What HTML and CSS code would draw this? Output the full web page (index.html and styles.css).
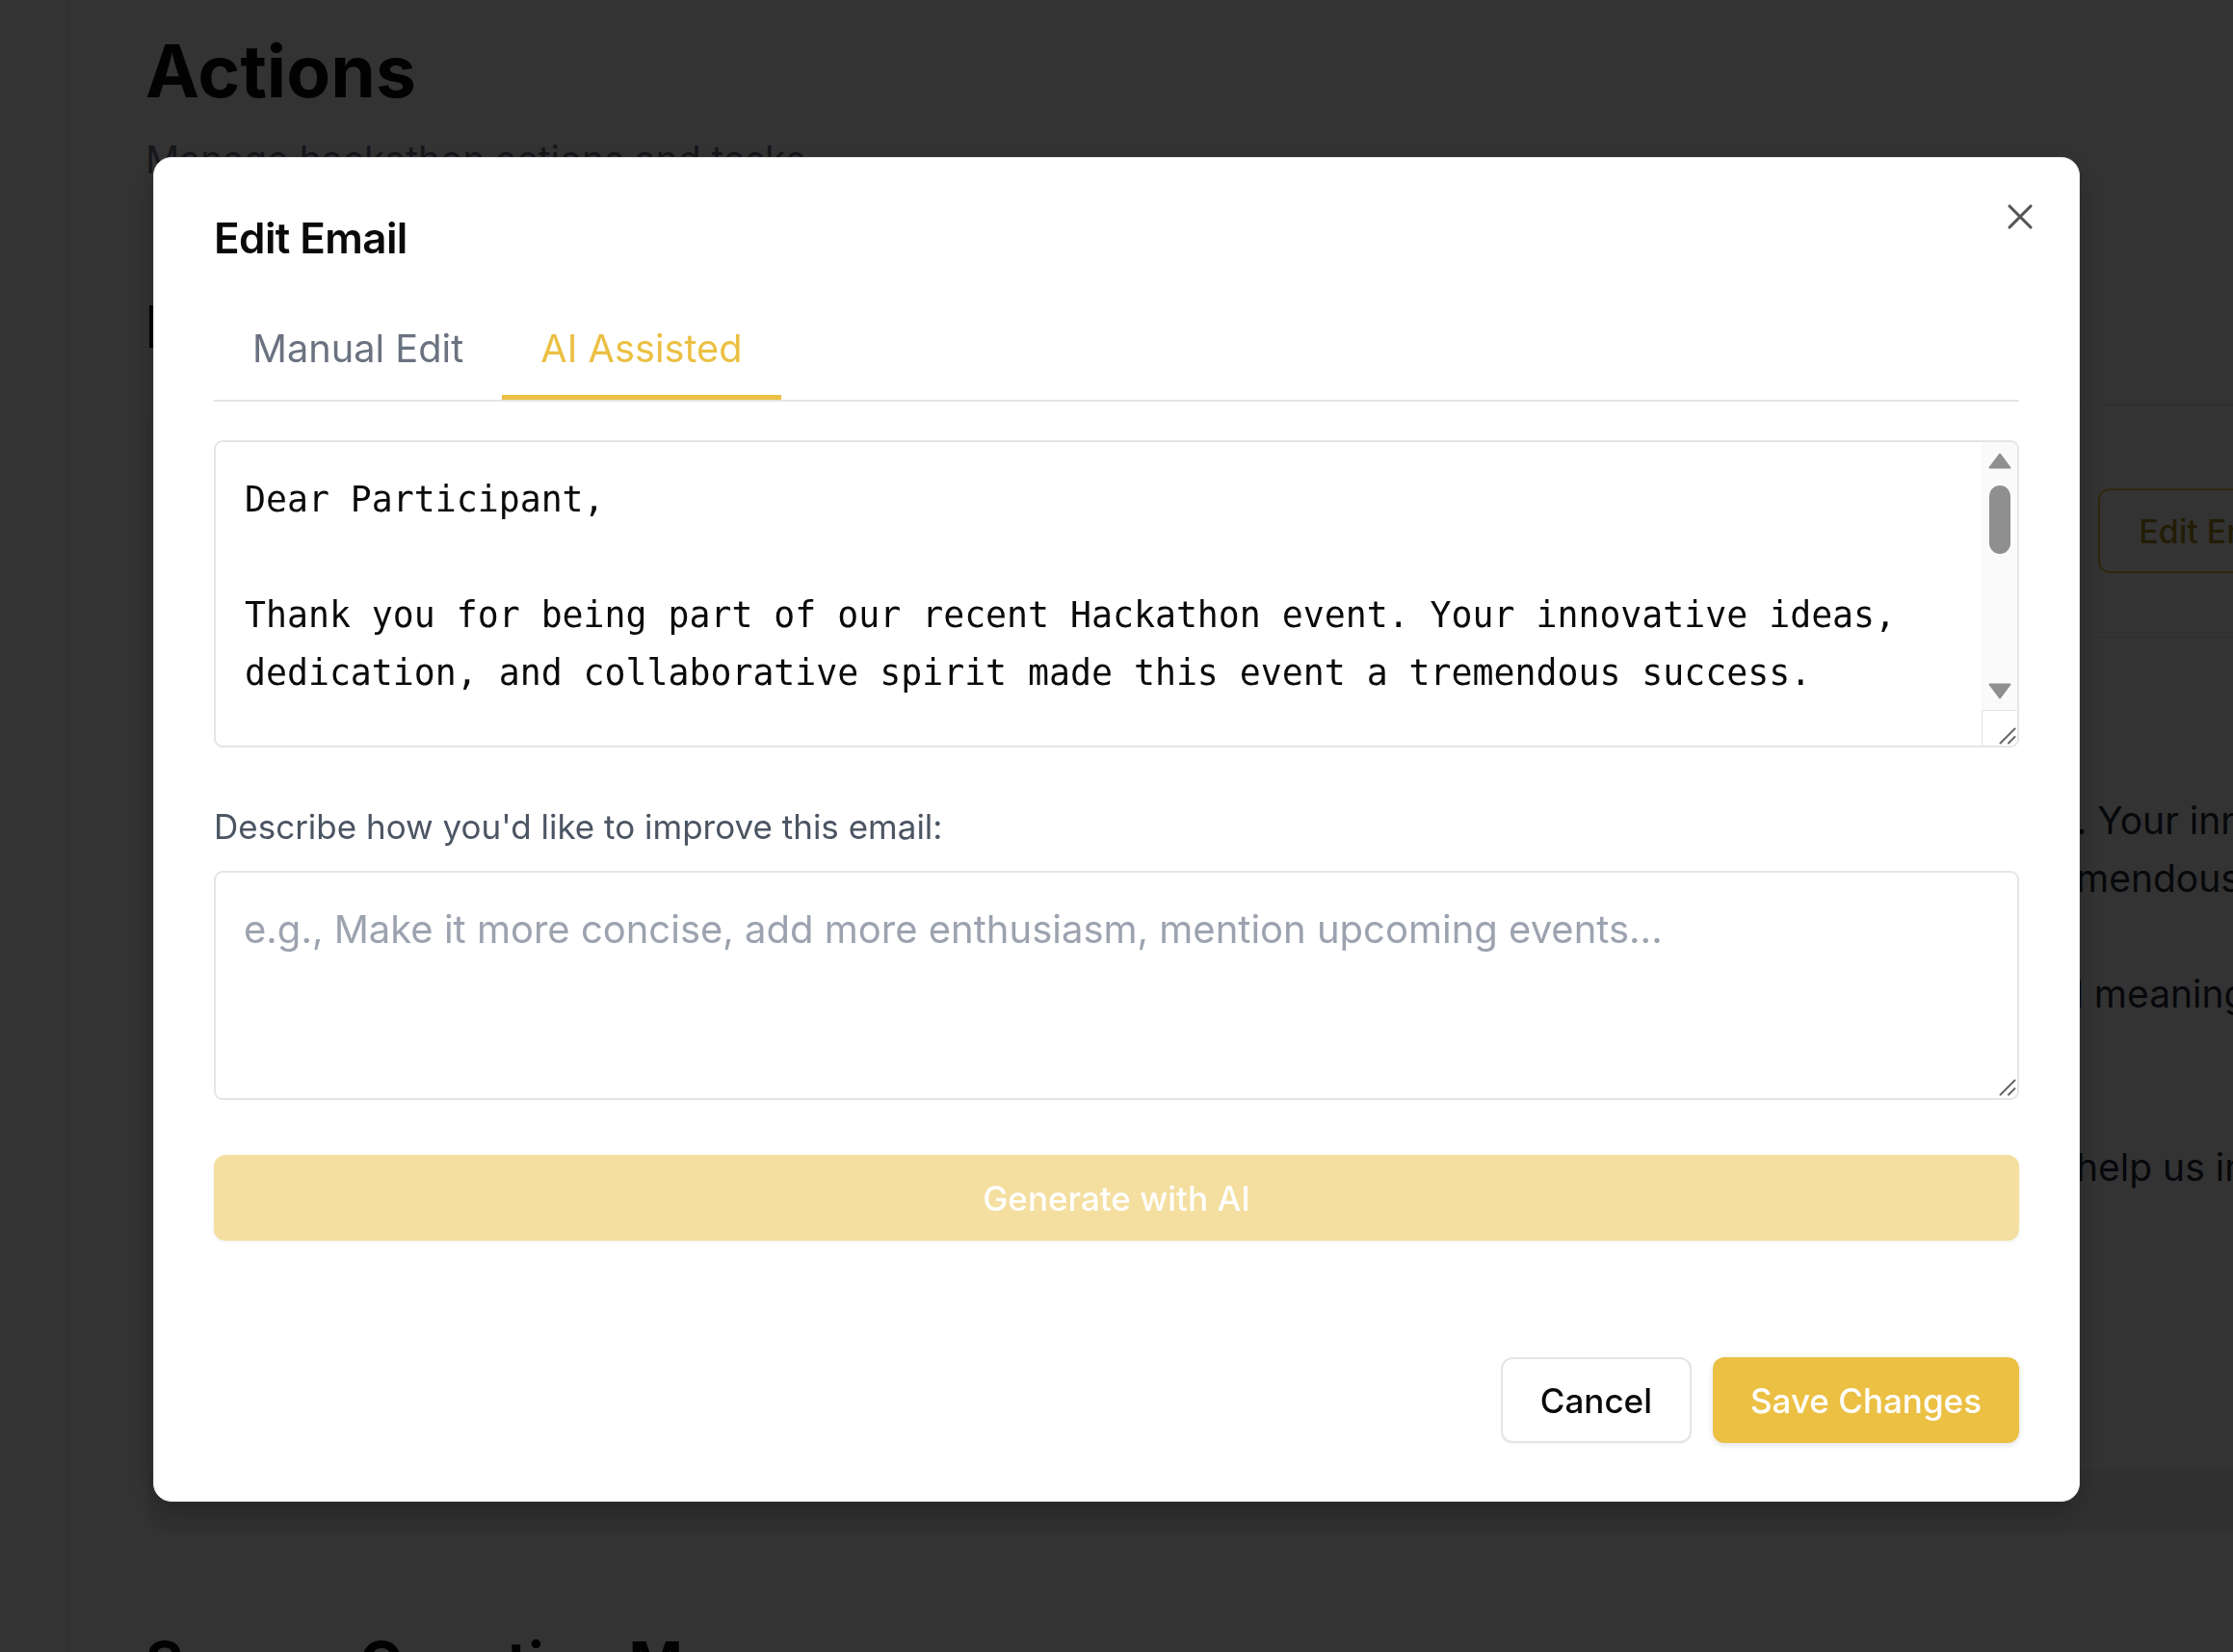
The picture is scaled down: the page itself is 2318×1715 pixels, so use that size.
FILE: index.html
```html
<!DOCTYPE html>
<html lang="en">
<head>
<meta charset="utf-8">
<title>Actions – Edit Email</title>
<link rel="stylesheet" href="styles.css">
</head>
<body>
<div class="app">
  <aside class="sidebar"></aside>
  <main class="main">
    <h1 class="page-title">Actions</h1>
    <p class="page-subtitle">Manage hackathon actions and tasks</p>
    <h2 class="section-title">Email Templates</h2>
    <section class="card">
      <div class="card-head">
        <div class="card-head-text">
          <div class="card-title">Post-Event Thank You Email</div>
        </div>
        <button class="btn-outline">Edit Email</button>
      </div>
      <div class="card-body">
        <div class="pline"><span class="pre">Thank you for being part of our recent Hackathon event</span><span class="vis">. Your innovative ideas, dedication, and</span></div>
        <div class="pline"><span class="pre">collaborative spirit made this event a tre</span><span class="vis">mendous success.</span></div>
        <div class="pline"><span class="pre">&nbsp;</span></div>
        <div class="pline"><span class="pre">We hope you found the experience both rewarding an</span><span class="vis tuck">d meaningful. We would love to hear</span></div>
        <div class="pline"><span class="pre">your thoughts about the event.</span></div>
        <div class="pline"><span class="pre">&nbsp;</span></div>
        <div class="pline"><span class="pre">Please take a moment to complete our short survey to </span><span class="vis">help us improve future events.</span></div>
      </div>
      <div class="card-foot"></div>
    </section>
    <h2 class="section-title section-title-lower">Survey Question Manager</h2>
  </main>
</div>

<div class="overlay">
  <div class="modal" role="dialog" aria-labelledby="modal-title">
    <button class="close-btn" aria-label="Close">
      <svg viewBox="0 0 24 24" width="44" height="44"><path d="M18 6 6 18M6 6l12 12" fill="none" stroke="currentColor" stroke-width="1.7" stroke-linecap="round"/></svg>
    </button>
    <h2 class="modal-title" id="modal-title">Edit Email</h2>
    <div class="tabs">
      <button class="tab">Manual Edit</button>
      <button class="tab tab-active">AI Assisted</button>
    </div>
    <div class="email-box">
      <div class="email-text">Dear Participant,

Thank you for being part of our recent Hackathon event. Your innovative ideas, dedication, and collaborative spirit made this event a tremendous success.

We truly appreciate the time and energy you invested. We hope you found the experience both rewarding and meaningful.

Please take a moment to complete our short survey to help us improve future events.</div>
      <div class="scrollbar">
        <svg class="sb-arrow sb-up" viewBox="0 0 24 17" width="24" height="17"><path d="M12 1.5 22.5 15.5H1.5Z" fill="#8f8f8f" stroke="#8f8f8f" stroke-width="2" stroke-linejoin="round"/></svg>
        <div class="sb-thumb"></div>
        <div class="sb-space"></div>
        <svg class="sb-arrow sb-down" viewBox="0 0 24 18" width="24" height="18"><path d="M12 16.5 22.5 2.5H1.5Z" fill="#8f8f8f" stroke="#8f8f8f" stroke-width="2" stroke-linejoin="round"/></svg>
        <div class="sb-corner">
          <svg class="grip" viewBox="0 0 18 18" width="18" height="18"><path d="M1.5 16.5 16.5 1.5M10 16.5 16.5 10" fill="none" stroke="#666" stroke-width="2" stroke-linecap="round"/></svg>
        </div>
      </div>
    </div>
    <div class="field-label">Describe how you'd like to improve this email:</div>
    <div class="prompt-box">
      <span class="placeholder">e.g., Make it more concise, add more enthusiasm, mention upcoming events...</span>
      <svg class="grip prompt-grip" viewBox="0 0 18 18" width="18" height="18"><path d="M1.5 16.5 16.5 1.5M10 16.5 16.5 10" fill="none" stroke="#666" stroke-width="2" stroke-linecap="round"/></svg>
    </div>
    <button class="generate-btn" disabled>Generate with AI</button>
    <div class="modal-footer">
      <button class="btn-cancel">Cancel</button>
      <button class="btn-save">Save Changes</button>
    </div>
  </div>
</div>
</body>
</html>
```
FILE: styles.css
```css
html, body {
  margin: 0;
  height: 100%;
  overflow: hidden;
}
body {
  font-family: Inter, "Noto Sans", "Liberation Sans", sans-serif;
  background: #ffffff;
  color: #0a0a0a;
}
button {
  font-family: inherit;
  cursor: pointer;
}

/* ---------- background page ---------- */
.app {
  display: flex;
  min-height: 100vh;
}
.sidebar {
  flex: 0 0 71px;
  box-sizing: border-box;
  border-right: 1px solid #e5e7eb;
}
.main {
  flex: none;
  padding: 29px 0 0 80px;
}
.page-title {
  margin: 0;
  font-size: 75px;
  line-height: 90px;
  font-weight: 700;
  color: #0a0a0a;
}
.page-subtitle {
  margin: 17px 0 0;
  font-size: 39px;
  line-height: 59px;
  color: #6b7280;
}
.section-title {
  margin: 108px 0 0;
  font-size: 60px;
  line-height: 72px;
  font-weight: 700;
  color: #0a0a0a;
}
.section-title-lower {
  margin-top: 103px;
}
.card {
  margin: 45px 0 0 4px;
  width: 2328px;
  box-sizing: border-box;
  border: 1px solid #e5e7eb;
  border-radius: 19px;
  background: #ffffff;
  box-shadow: 0 2px 6px rgba(0, 0, 0, 0.08);
}
.card-head {
  display: flex;
  justify-content: space-between;
  align-items: flex-start;
  height: 241px;
  box-sizing: border-box;
  padding: 86px 62px 0 65px;
  border-bottom: 1px solid #e5e7eb;
}
.card-head-text {
  flex: 1;
  min-width: 0;
}
.card-title {
  font-size: 44px;
  line-height: 53px;
  font-weight: 600;
}
.btn-outline {
  height: 88px;
  padding: 0 40px;
  border: 2px solid #ebc043;
  border-radius: 12px;
  background: #ffffff;
  color: #b08a1a;
  font-size: 34px;
  font-weight: 500;
}
.card-body {
  height: 863px;
  box-sizing: border-box;
  padding: 160px 0 0 62px;
}
.pline {
  display: flex;
  white-space: nowrap;
  font-size: 39px;
  line-height: 60px;
  color: #1f2937;
}
.pre {
  flex: 0 0 1937px;
  text-align: right;
  overflow: hidden;
}
.tuck {
  margin-left: -16px;
}
.card-foot {
  height: 61px;
  background: #f4f4f5;
  border-radius: 0 0 18px 18px;
}

/* ---------- overlay + modal ---------- */
.overlay {
  position: fixed;
  inset: 0;
  z-index: 10;
  background: rgba(0, 0, 0, 0.8);
  display: flex;
  justify-content: center;
  align-items: flex-start;
  padding-top: 163px;
}
.modal {
  position: relative;
  width: 2000px;
  box-sizing: border-box;
  background: #ffffff;
  border: 1px solid #e4e4e7;
  border-radius: 19px;
  padding: 57px 62px 60px;
  box-shadow: 0 12px 32px rgba(0, 0, 0, 0.25);
}
.close-btn {
  position: absolute;
  top: 39px;
  right: 39px;
  width: 44px;
  height: 44px;
  padding: 0;
  border: 0;
  background: none;
  color: #555555;
  display: flex;
}
.modal-title {
  margin: 0;
  font-size: 44px;
  line-height: 53px;
  font-weight: 600;
  letter-spacing: -0.6px;
  color: #0a0a0a;
}
.tabs {
  display: flex;
  margin-top: 41px;
  border-bottom: 2px solid #e5e5e5;
}
.tab {
  padding: 23px 40px 25px;
  border: 0;
  border-bottom: 5px solid transparent;
  background: none;
  font-size: 39.75px;
  line-height: 47px;
  font-weight: 400;
  color: #6b7280;
}
.tab-active {
  color: #ebc043;
  border-bottom-color: #ebc043;
}

.email-box {
  display: flex;
  margin-top: 40px;
  height: 319px;
  box-sizing: border-box;
  border: 2px solid #e5e5e5;
  border-radius: 9px;
  overflow: hidden;
}
.email-text {
  flex: 1;
  min-width: 0;
  padding: 30px 30px 0;
  font-family: "DejaVu Sans Mono", "Liberation Mono", monospace;
  font-size: 36.5px;
  line-height: 60px;
  color: #0a0a0a;
  white-space: pre-wrap;
  overflow: hidden;
}
.scrollbar {
  flex: 0 0 37px;
  display: flex;
  flex-direction: column;
  align-items: center;
  background: #fafafa;
}
.sb-arrow {
  flex: none;
  display: block;
}
.sb-up {
  margin-top: 11px;
}
.sb-thumb {
  flex: none;
  margin-top: 17px;
  width: 22px;
  height: 71px;
  border-radius: 11px;
  background: #8f8f8f;
}
.sb-space {
  flex: 1;
}
.sb-down {
  margin-bottom: 11px;
}
.sb-corner {
  flex: none;
  align-self: stretch;
  height: 37px;
  box-sizing: border-box;
  border-top: 1px solid #e3e3e3;
  border-left: 1px solid #e3e3e3;
  background: #ffffff;
  display: flex;
  justify-content: flex-end;
  align-items: flex-end;
  padding: 0 1px 1px 0;
}
.grip {
  display: block;
}

.field-label {
  margin-top: 58px;
  font-size: 35px;
  line-height: 49px;
  font-weight: 400;
  color: #4b5563;
}
.prompt-box {
  position: relative;
  margin-top: 21px;
  height: 238px;
  box-sizing: border-box;
  border: 2px solid #e5e5e5;
  border-radius: 9px;
  padding: 29px 29px;
  font-size: 40px;
  line-height: 59px;
}
.placeholder {
  color: #9ca3af;
}
.prompt-grip {
  position: absolute;
  right: 1px;
  bottom: 2px;
}

.generate-btn {
  display: block;
  width: 100%;
  margin-top: 57px;
  height: 89px;
  border: 0;
  border-radius: 12px;
  background: #ebc043;
  opacity: 0.5;
  color: #ffffff;
  font-size: 35px;
  font-weight: 500;
  box-shadow: 0 2px 4px rgba(0, 0, 0, 0.1);
}
.modal-footer {
  display: flex;
  justify-content: flex-end;
  gap: 22px;
  margin-top: 121px;
}
.btn-cancel,
.btn-save {
  height: 89px;
  padding: 0 39px;
  border-radius: 12px;
  font-size: 35px;
  font-weight: 500;
}
.btn-cancel {
  background: #ffffff;
  border: 2px solid #e5e5e5;
  color: #0a0a0a;
  box-shadow: 0 1px 2px rgba(0, 0, 0, 0.05);
}
.btn-save {
  background: #ebc043;
  border: 0;
  color: #ffffff;
  box-shadow: 0 2px 6px rgba(0, 0, 0, 0.12);
}
```
